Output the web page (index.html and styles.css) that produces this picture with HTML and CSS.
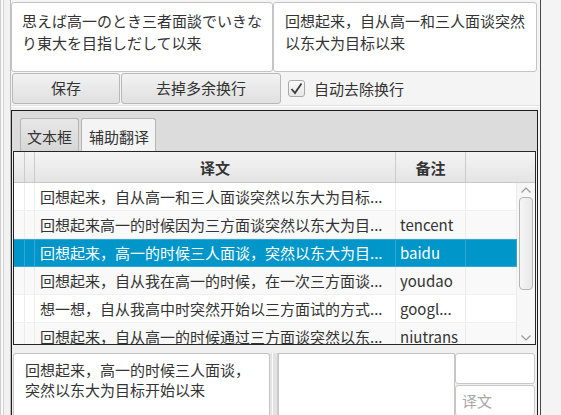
FILE: index.html
```html
<!DOCTYPE html>
<html lang="zh">
<head>
<meta charset="utf-8">
<title>翻译</title>
<link rel="stylesheet" href="styles.css">
</head>
<body>
<div class="app">
  <div class="strip"></div>
  <div class="main">
    <div class="top">
      <div class="ta ta-l">思えば高一のとき三者面談でいきな<br>り東大を目指しだして以来</div>
      <div class="ta ta-r">回想起来，自从高一和三人面谈突然<br>以东大为目标以来</div>
    </div>
    <div class="btnrow">
      <div class="btn btn-save">保存</div>
      <div class="btn btn-trim">去掉多余换行</div>
      <label class="check">
        <span class="box"><svg width="15" height="15" viewBox="0 0 15 15"><polyline points="2.5,8 6,12 12.5,2.5" fill="none" stroke="#3a3a3a" stroke-width="1.8"/></svg></span>
        <span>自动去除换行</span>
      </label>
    </div>
    <div class="sep"></div>
    <div class="tabpane">
      <div class="tabhead">
        <div class="tab">文本框</div>
        <div class="tab tab-sel">辅助翻译</div>
      </div>
      <div class="tabcontent">
        <div class="table">
          <div class="thead">
            <div class="c c-r1"></div>
            <div class="c c-r2"></div>
            <div class="c c-txt hc">译文</div>
            <div class="c c-note hc">备注</div>
            <div class="c c-last"></div>
          </div>
          <div class="tbody">
            <div class="rows">
              <div class="row">
                <div class="c c-r1"></div><div class="c c-r2"></div>
                <div class="c c-txt">回想起来，自从高一和三人面谈突然以东大为目标...</div>
                <div class="c c-note"></div><div class="c c-last"></div>
              </div>
              <div class="row odd">
                <div class="c c-r1"></div><div class="c c-r2"></div>
                <div class="c c-txt">回想起来高一的时候因为三方面谈突然以东大为目...</div>
                <div class="c c-note">tencent</div><div class="c c-last"></div>
              </div>
              <div class="row sel">
                <div class="c c-r1"></div><div class="c c-r2"></div>
                <div class="c c-txt">回想起来，高一的时候三人面谈，突然以东大为目...</div>
                <div class="c c-note">baidu</div><div class="c c-last"></div>
              </div>
              <div class="row odd">
                <div class="c c-r1"></div><div class="c c-r2"></div>
                <div class="c c-txt">回想起来，自从我在高一的时候，在一次三方面谈...</div>
                <div class="c c-note">youdao</div><div class="c c-last"></div>
              </div>
              <div class="row">
                <div class="c c-r1"></div><div class="c c-r2"></div>
                <div class="c c-txt">想一想，自从我高中时突然开始以三方面试的方式...</div>
                <div class="c c-note">googl...</div><div class="c c-last"></div>
              </div>
              <div class="row odd">
                <div class="c c-r1"></div><div class="c c-r2"></div>
                <div class="c c-txt">回想起来，自从高一的时候通过三方面谈突然以东...</div>
                <div class="c c-note">niutrans</div><div class="c c-last"></div>
              </div>
            </div>
            <div class="vscroll">
              <svg class="arrow" width="12" height="8" viewBox="0 0 12 8"><polyline points="1.5,6.5 6,2 10.5,6.5" fill="none" stroke="#9a9a9a" stroke-width="1.2"/></svg>
              <div class="thumb"></div>
              <div class="spacer"></div>
              <svg class="arrow" width="12" height="8" viewBox="0 0 12 8"><polyline points="1.5,1.5 6,6 10.5,1.5" fill="none" stroke="#9a9a9a" stroke-width="1.2"/></svg>
            </div>
          </div>
        </div>
        <div class="bottom">
          <div class="ta ta-low">回想起来，高一的时候三人面谈，<br>突然以东大为目标开始以来</div>
          <div class="divider"></div>
          <div class="ta ta-mid"></div>
          <div class="fields">
            <div class="field"></div>
            <div class="field ph">译文</div>
          </div>
        </div>
      </div>
    </div>
  </div>
</div>
</body>
</html>
```
FILE: styles.css
```css
* { box-sizing: border-box; }
html, body { margin: 0; padding: 0; }
body {
  width: 561px;
  height: 415px;
  overflow: hidden;
  background: #f4f4f4;
  font-family: "Noto Sans CJK SC", "Noto Sans", sans-serif;
  font-size: 15px;
  color: #333;
}
.app { display: flex; height: 415px; }
.strip {
  width: 11px;
  flex: none;
  background: linear-gradient(to right, #cdcdcd 0 1px, #fafafa 1px 3px, #d2d2d2 3px 4px, #f1f1f1 4px 10px, #bdbdbd 10px 11px);
}
.main {
  width: 530px;
  flex: none;
  display: flex;
  flex-direction: column;
  border-right: 1px solid #4a4a4a;
}
.top { height: 72px; display: flex; padding-top: 2px; flex: none; }
.ta {
  background: #fff;
  border: 1px solid #c4c4c4;
  border-radius: 3px;
  line-height: 21.5px;
  white-space: nowrap;
  overflow: hidden;
}
.ta-l { width: 262px; padding: 7px 10px; }
.ta-r { width: 264px; padding: 7px 11px; }
.btnrow {
  height: 32px;
  flex: none;
  display: flex;
  align-items: center;
  padding-left: 1px;
  gap: 1px;
}
.btn {
  height: 31px;
  border: 1px solid #b8b8b8;
  border-radius: 3px;
  background: linear-gradient(#f2f2f2, #e0e0e0);
  display: flex;
  align-items: center;
  justify-content: center;
  line-height: 20px;
}
.btn-save { width: 108px; }
.btn-trim { width: 160px; }
.check { margin-left: 6px; display: flex; align-items: center; gap: 9px; }
.box {
  width: 17px;
  height: 17px;
  border: 1px solid #a9a9a9;
  border-radius: 3px;
  background: linear-gradient(#fafafa, #e6e6e6);
  display: flex;
  align-items: center;
  justify-content: center;
}
.sep {
  height: 6px;
  flex: none;
  background: linear-gradient(#f4f4f4 0 1px, #e2e2e2 1px 2px, #ffffff 2px 3px, #f0f0f0 3px);
}
.tabpane {
  flex: 1;
  min-height: 0;
  margin-right: 2px;
  border: 1px solid #1c1c1c;
  border-bottom: none;
  display: flex;
  flex-direction: column;
}
.tabhead {
  height: 40px;
  flex: none;
  background: #dcdcdc;
  display: flex;
  align-items: flex-end;
  padding-left: 8px;
  gap: 2px;
}
.tab {
  height: 33px;
  padding: 2px 6px 0;
  border: 1px solid #b5b5b5;
  border-bottom: none;
  border-radius: 3px 3px 0 0;
  background: linear-gradient(#e8e8e8, #d6d6d6);
  display: flex;
  align-items: center;
}
.tab-sel { background: #f4f4f4; padding: 2px 6px 0 7px; }
.tabcontent { flex: 1; display: flex; flex-direction: column; background: #f0f0f0; min-height: 0; }
.table {
  margin: 0 1px;
  height: 194px;
  flex: none;
  border: 1px solid #262626;
  background: #fff;
  display: flex;
  flex-direction: column;
}
.thead {
  height: 31px;
  flex: none;
  display: flex;
  background: linear-gradient(#f4f4f4, #e4e4e4);
  border-bottom: 1px solid #c6c6c6;
}
.thead .c { border-right: 1px solid #cbcbcb; }
.hc { font-weight: bold; justify-content: center; padding: 0 !important; }
.c {
  display: flex;
  align-items: center;
  white-space: nowrap;
  overflow: hidden;
  border-right: 1px solid #ececec;
}
.c-r1 { width: 11px; flex: none; }
.c-r2 { width: 10px; flex: none; }
.c-txt { width: 361px; flex: none; padding-left: 5px; }
.c-note { width: 70px; flex: none; padding-left: 4px; }
.c-last { flex: 1; }
.thead .c-last { border-right: none; }
.tbody { flex: 1; display: flex; min-height: 0; overflow: hidden; }
.rows { flex: 1; display: flex; flex-direction: column; }
.row {
  height: 28px;
  flex: none;
  display: flex;
  background: #fff;
  border-bottom: 1px solid #f0f0f0;
  line-height: 20px;
}
.row.odd { background: #f9f9f9; }
.row.sel { background: #0096c9; color: #fff; border-bottom-color: #35a9d4; box-shadow: inset 0 1px 0 #35a9d4; }
.row.sel .c { border-right-color: #2fa6d3; }
.vscroll {
  width: 18px;
  flex: none;
  background: #f7f7f7;
  display: flex;
  flex-direction: column;
  align-items: center;
  padding: 3px 0 2px;
}
.arrow { flex: none; display: block; }
.thumb {
  width: 14px;
  height: 93px;
  margin-top: 3px;
  border: 1px solid #b4b4b4;
  border-radius: 4px;
  background: linear-gradient(to right, #f6f6f6, #e8e8e8);
  flex: none;
}
.spacer { flex: 1; }
.bottom { flex: 1; display: flex; padding-top: 8px; min-height: 0; }
.ta-low { width: 257px; margin-left: 1px; padding: 6px 11px; line-height: 20px; border-bottom: none; border-radius: 3px 3px 0 0; }
.divider {
  width: 8px;
  flex: none;
  background: linear-gradient(to right, #e4e4e4 0 2px, #fafafa 2px 3px, #e2e2e2 3px 7px, #cfcfcf 7px 8px);
}
.ta-mid { width: 177px; border-bottom: none; border-radius: 0; }
.fields { width: 80px; flex: none; display: flex; flex-direction: column; gap: 1px; }
.field {
  height: 31px;
  flex: none;
  background: #fff;
  border: 1px solid #c8c8c8;
  border-radius: 3px;
  padding-left: 6px;
  display: flex;
  align-items: center;
}
.ph { color: #a8a8a8; }
```
